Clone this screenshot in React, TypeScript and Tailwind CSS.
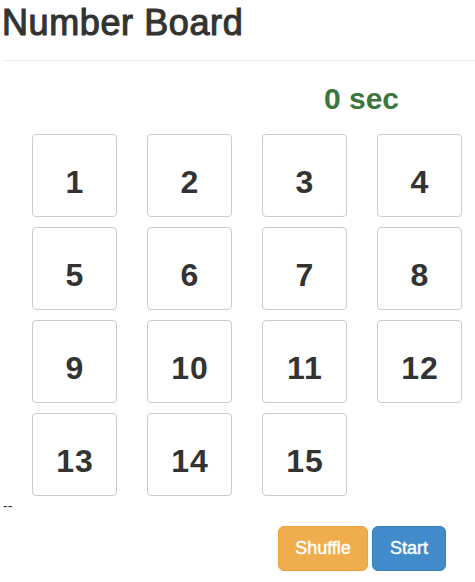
import React from 'react'

const tiles = [1, 2, 3, 4, 5, 6, 7, 8, 9, 10, 11, 12, 13, 14, 15]

export default function App() {
  return (
    <div className="w-[475px] h-[582px] bg-white text-[#333] font-['Liberation_Sans',Arial,sans-serif]">
      <h1 className="pt-[3px] pl-[2px] text-[36px] leading-[1.1] font-normal tracking-[0.6px] [-webkit-text-stroke:1.1px_#333]">
        Number Board
      </h1>
      <div className="mt-[17px] ml-[2px] border-t border-[#eee]" />

      {/* timer */}
      <div className="mt-[21px] flex justify-end pr-[76px]">
        <span className="text-[30px] leading-[1.1] font-bold text-[#3c763d]">0 sec</span>
      </div>

      {/* board */}
      <div className="mt-[19px] ml-[32px] grid grid-cols-[repeat(4,85px)] gap-x-[30px] gap-y-[10px]">
        {tiles.map(n => (
          <div
            key={n}
            className="h-[83px] rounded-[4px] border border-[#ccc] flex justify-center pt-[31px] pl-[1px] text-[32px] leading-8 font-bold tracking-[1px]"
          >
            {n}
          </div>
        ))}
      </div>

      <div className="pl-[3px] text-[14px] leading-5">--</div>

      <div className="mt-[10px] flex justify-end gap-[4px] pr-[29px]">
        <button className="w-[90px] h-[45px] rounded-[6px] border border-[#eea236] bg-[#f0ad4e] text-white text-[18px] leading-6 [-webkit-text-stroke:0.4px_#fff]">
          Shuffle
        </button>
        <button className="w-[74px] h-[45px] rounded-[6px] border border-[#357ebd] bg-[#428bca] text-white text-[18px] leading-6 [-webkit-text-stroke:0.4px_#fff]">
          Start
        </button>
      </div>
    </div>
  )
}
